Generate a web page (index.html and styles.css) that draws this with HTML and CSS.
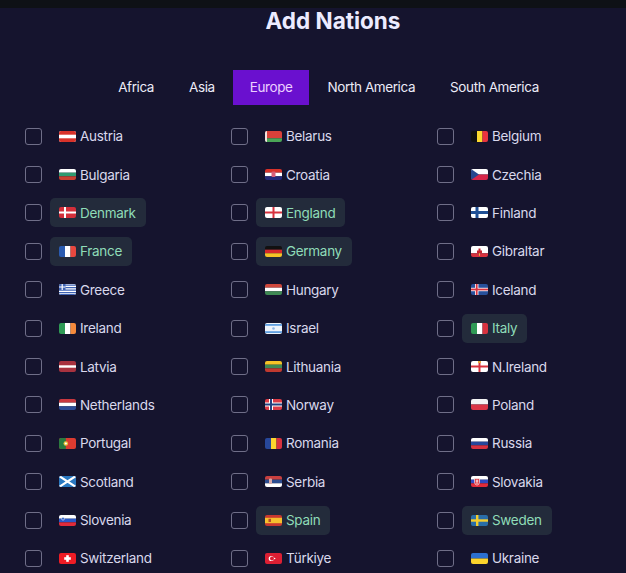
FILE: index.html
```html
<!DOCTYPE html>
<html lang="en">
<head>
    <meta charset="UTF-8">
    <meta name="viewport" content="width=device-width, initial-scale=1.0">
    <title>Add Nations</title>
    <link rel="stylesheet" href="styles.css">
</head>
<body>
    <div class="topbar"></div>
    <h1>Add Nations</h1>

    <nav class="tabs">
        <a class="tab">Africa</a>
        <a class="tab">Asia</a>
        <a class="tab active">Europe</a>
        <a class="tab">North America</a>
        <a class="tab">South America</a>
    </nav>

    <div class="nations">
        <div class="nation"><input type="checkbox"><span class="chip">
            <svg class="flag" viewBox="0 0 17 11"><rect width="17" height="11" fill="#fff"/><rect width="17" height="3.7" fill="#d8322a"/><rect y="7.3" width="17" height="3.7" fill="#d8322a"/></svg>Austria</span></div>
        <div class="nation"><input type="checkbox"><span class="chip">
            <svg class="flag" viewBox="0 0 17 11"><rect width="17" height="7.3" fill="#d8413a"/><rect y="7.3" width="17" height="3.7" fill="#4aa657"/><rect width="2" height="11" fill="#f3e3e0"/></svg>Belarus</span></div>
        <div class="nation"><input type="checkbox"><span class="chip">
            <svg class="flag" viewBox="0 0 17 11"><rect width="6" height="11" fill="#111"/><rect x="6" width="5.5" height="11" fill="#fbd92f"/><rect x="11.5" width="5.5" height="11" fill="#e8343f"/></svg>Belgium</span></div>

        <div class="nation"><input type="checkbox"><span class="chip">
            <svg class="flag" viewBox="0 0 17 11"><rect width="17" height="3.7" fill="#fff"/><rect y="3.7" width="17" height="3.6" fill="#2f9a6f"/><rect y="7.3" width="17" height="3.7" fill="#c9402f"/></svg>Bulgaria</span></div>
        <div class="nation"><input type="checkbox"><span class="chip">
            <svg class="flag" viewBox="0 0 17 11"><rect width="17" height="3.7" fill="#d8322a"/><rect y="3.7" width="17" height="3.6" fill="#fff"/><rect y="7.3" width="17" height="3.7" fill="#23297a"/><rect x="6.5" y="2.5" width="4" height="5.5" rx="1" fill="#d8607a"/></svg>Croatia</span></div>
        <div class="nation"><input type="checkbox"><span class="chip">
            <svg class="flag" viewBox="0 0 17 11"><rect width="17" height="5.5" fill="#fff"/><rect y="5.5" width="17" height="5.5" fill="#d8274a"/><path d="M0 0L8 5.5L0 11Z" fill="#27478f"/></svg>Czechia</span></div>

        <div class="nation picked"><input type="checkbox"><span class="chip">
            <svg class="flag" viewBox="0 0 17 11"><rect width="17" height="11" fill="#d32f3a"/><rect x="5" width="2" height="11" fill="#fff"/><rect y="4.5" width="17" height="2" fill="#fff"/></svg>Denmark</span></div>
        <div class="nation picked"><input type="checkbox"><span class="chip">
            <svg class="flag" viewBox="0 0 17 11"><rect width="17" height="11" fill="#fff"/><rect x="7.5" width="2" height="11" fill="#d8323f"/><rect y="4.5" width="17" height="2" fill="#d8323f"/></svg>England</span></div>
        <div class="nation"><input type="checkbox"><span class="chip">
            <svg class="flag" viewBox="0 0 17 11"><rect width="17" height="11" fill="#fff"/><rect x="4.5" width="3" height="11" fill="#1f4f95"/><rect y="4" width="17" height="3" fill="#1f4f95"/></svg>Finland</span></div>

        <div class="nation picked"><input type="checkbox"><span class="chip">
            <svg class="flag" viewBox="0 0 17 11"><rect width="6" height="11" fill="#2a5bb0"/><rect x="6" width="5.5" height="11" fill="#fff"/><rect x="11.5" width="5.5" height="11" fill="#e8483f"/></svg>France</span></div>
        <div class="nation picked"><input type="checkbox"><span class="chip">
            <svg class="flag" viewBox="0 0 17 11"><rect width="17" height="3.7" fill="#111"/><rect y="3.7" width="17" height="3.6" fill="#d6282b"/><rect y="7.3" width="17" height="3.7" fill="#f6c326"/></svg>Germany</span></div>
        <div class="nation"><input type="checkbox"><span class="chip">
            <svg class="flag" viewBox="0 0 17 11"><rect width="17" height="7.3" fill="#fff"/><rect y="7.3" width="17" height="3.7" fill="#d8323f"/><path d="M6 7.3V4.5H7.5V2.5H9.5V4.5H11V7.3Z" fill="#c4232f"/><rect x="8" y="7.3" width="1" height="2.5" fill="#e8b93a"/></svg>Gibraltar</span></div>

        <div class="nation"><input type="checkbox"><span class="chip">
            <svg class="flag" viewBox="0 0 17 11"><rect width="17" height="11" fill="#fff"/><path d="M0 1.2H17M0 3.7H17M0 6.2H17M0 8.7H17M0 10.7H17" stroke="#3f63b4" stroke-width="1.2"/><rect width="6.5" height="6" fill="#3f63b4"/><path d="M3.2 0V6M0 3H6.5" stroke="#fff" stroke-width="1.2"/></svg>Greece</span></div>
        <div class="nation"><input type="checkbox"><span class="chip">
            <svg class="flag" viewBox="0 0 17 11"><rect width="17" height="3.7" fill="#d0483c"/><rect y="3.7" width="17" height="3.6" fill="#fff"/><rect y="7.3" width="17" height="3.7" fill="#3f8a54"/></svg>Hungary</span></div>
        <div class="nation"><input type="checkbox"><span class="chip">
            <svg class="flag" viewBox="0 0 17 11"><rect width="17" height="11" fill="#27509b"/><rect x="4" width="3.4" height="11" fill="#fff"/><rect y="3.8" width="17" height="3.4" fill="#fff"/><rect x="4.8" width="1.8" height="11" fill="#d8323f"/><rect y="4.6" width="17" height="1.8" fill="#d8323f"/></svg>Iceland</span></div>

        <div class="nation"><input type="checkbox"><span class="chip">
            <svg class="flag" viewBox="0 0 17 11"><rect width="6" height="11" fill="#2f9a55"/><rect x="6" width="5.5" height="11" fill="#fff"/><rect x="11.5" width="5.5" height="11" fill="#f58a3c"/></svg>Ireland</span></div>
        <div class="nation"><input type="checkbox"><span class="chip">
            <svg class="flag" viewBox="0 0 17 11"><rect width="17" height="11" fill="#eef4fb"/><rect y="1" width="17" height="1.8" fill="#5f9fe0"/><rect y="8.2" width="17" height="1.8" fill="#5f9fe0"/><circle cx="8.5" cy="5.5" r="1.3" fill="#8db6e6"/></svg>Israel</span></div>
        <div class="nation picked"><input type="checkbox"><span class="chip">
            <svg class="flag" viewBox="0 0 17 11"><rect width="6" height="11" fill="#2f9a55"/><rect x="6" width="5.5" height="11" fill="#fff"/><rect x="11.5" width="5.5" height="11" fill="#d8323f"/></svg>Italy</span></div>

        <div class="nation"><input type="checkbox"><span class="chip">
            <svg class="flag" viewBox="0 0 17 11"><rect width="17" height="11" fill="#a8323f"/><rect y="4.3" width="17" height="2.4" fill="#fff"/></svg>Latvia</span></div>
        <div class="nation"><input type="checkbox"><span class="chip">
            <svg class="flag" viewBox="0 0 17 11"><rect width="17" height="3.7" fill="#f6c326"/><rect y="3.7" width="17" height="3.6" fill="#3f8a54"/><rect y="7.3" width="17" height="3.7" fill="#c0392f"/></svg>Lithuania</span></div>
        <div class="nation"><input type="checkbox"><span class="chip">
            <svg class="flag" viewBox="0 0 17 11"><rect width="17" height="11" fill="#fff"/><rect x="7.5" width="2" height="11" fill="#d8323f"/><rect y="4.5" width="17" height="2" fill="#d8323f"/><rect x="7" y="0" width="3" height="2" fill="#e8a83a"/></svg>N.Ireland</span></div>

        <div class="nation"><input type="checkbox"><span class="chip">
            <svg class="flag" viewBox="0 0 17 11"><rect width="17" height="3.7" fill="#c9383f"/><rect y="3.7" width="17" height="3.6" fill="#fff"/><rect y="7.3" width="17" height="3.7" fill="#2c4c96"/></svg>Netherlands</span></div>
        <div class="nation"><input type="checkbox"><span class="chip">
            <svg class="flag" viewBox="0 0 17 11"><rect width="17" height="11" fill="#dc3b45"/><rect x="4" width="4" height="11" fill="#fff"/><rect y="3.5" width="17" height="4" fill="#fff"/><rect x="5" width="2" height="11" fill="#24427f"/><rect y="4.5" width="17" height="2" fill="#24427f"/></svg>Norway</span></div>
        <div class="nation"><input type="checkbox"><span class="chip">
            <svg class="flag" viewBox="0 0 17 11"><rect width="17" height="5.5" fill="#f4f4f4"/><rect y="5.5" width="17" height="5.5" fill="#dc3545"/></svg>Poland</span></div>

        <div class="nation"><input type="checkbox"><span class="chip">
            <svg class="flag" viewBox="0 0 17 11"><rect width="17" height="11" fill="#dc3b30"/><rect width="6.8" height="11" fill="#2a7a3f"/><circle cx="6.8" cy="5.5" r="2.3" fill="#e8c23a"/><circle cx="6.8" cy="5.5" r="1.1" fill="#fff"/></svg>Portugal</span></div>
        <div class="nation"><input type="checkbox"><span class="chip">
            <svg class="flag" viewBox="0 0 17 11"><rect width="6" height="11" fill="#27479a"/><rect x="6" width="5.5" height="11" fill="#fcd52e"/><rect x="11.5" width="5.5" height="11" fill="#d8323f"/></svg>Romania</span></div>
        <div class="nation"><input type="checkbox"><span class="chip">
            <svg class="flag" viewBox="0 0 17 11"><rect width="17" height="3.7" fill="#fff"/><rect y="3.7" width="17" height="3.6" fill="#27479a"/><rect y="7.3" width="17" height="3.7" fill="#d8323f"/></svg>Russia</span></div>

        <div class="nation"><input type="checkbox"><span class="chip">
            <svg class="flag" viewBox="0 0 17 11"><rect width="17" height="11" fill="#2a78c0"/><path d="M0 0L17 11M17 0L0 11" stroke="#fff" stroke-width="2.2"/></svg>Scotland</span></div>
        <div class="nation"><input type="checkbox"><span class="chip">
            <svg class="flag" viewBox="0 0 17 11"><rect width="17" height="3.7" fill="#c9403f"/><rect y="3.7" width="17" height="3.6" fill="#2c4c8f"/><rect y="7.3" width="17" height="3.7" fill="#fff"/><rect x="4" y="2.5" width="3" height="5.5" rx="1" fill="#d8a8a8"/></svg>Serbia</span></div>
        <div class="nation"><input type="checkbox"><span class="chip">
            <svg class="flag" viewBox="0 0 17 11"><rect width="17" height="3.7" fill="#fff"/><rect y="3.7" width="17" height="3.6" fill="#3048c0"/><rect y="7.3" width="17" height="3.7" fill="#e02b3a"/><path d="M3.5 2.5H8.5V6.5Q8.5 8.5 6 9.2Q3.5 8.5 3.5 6.5Z" fill="#e0404a" stroke="#fff" stroke-width=".6"/><path d="M6 3.5V8M4.8 5H7.2" stroke="#fff" stroke-width=".8"/></svg>Slovakia</span></div>

        <div class="nation"><input type="checkbox"><span class="chip">
            <svg class="flag" viewBox="0 0 17 11"><rect width="17" height="3.7" fill="#fff"/><rect y="3.7" width="17" height="3.6" fill="#2a58c8"/><rect y="7.3" width="17" height="3.7" fill="#e02b3a"/><circle cx="4" cy="3.7" r="1.5" fill="#3a68c8" stroke="#fff" stroke-width=".5"/></svg>Slovenia</span></div>
        <div class="nation picked"><input type="checkbox"><span class="chip">
            <svg class="flag" viewBox="0 0 17 11"><rect width="17" height="11" fill="#c8382f"/><rect y="2.8" width="17" height="5.4" fill="#f5c02e"/><rect x="3.5" y="3.8" width="2.5" height="3.2" fill="#b5482a"/></svg>Spain</span></div>
        <div class="nation picked"><input type="checkbox"><span class="chip">
            <svg class="flag" viewBox="0 0 17 11"><rect width="17" height="11" fill="#2a6ea8"/><rect x="5" width="2.4" height="11" fill="#f5cd2e"/><rect y="4.3" width="17" height="2.4" fill="#f5cd2e"/></svg>Sweden</span></div>

        <div class="nation"><input type="checkbox"><span class="chip">
            <svg class="flag" viewBox="0 0 17 11"><rect width="17" height="11" fill="#ee1c25"/><rect x="7.2" y="2.2" width="2.6" height="6.6" fill="#fff"/><rect x="5.2" y="4.2" width="6.6" height="2.6" fill="#fff"/></svg>Switzerland</span></div>
        <div class="nation"><input type="checkbox"><span class="chip">
            <svg class="flag" viewBox="0 0 17 11"><rect width="17" height="11" fill="#dc1f33"/><circle cx="6.3" cy="5.5" r="2.6" fill="#fff"/><circle cx="7" cy="5.5" r="2" fill="#dc1f33"/><circle cx="9.6" cy="5.5" r=".8" fill="#fff"/></svg>Türkiye</span></div>
        <div class="nation"><input type="checkbox"><span class="chip">
            <svg class="flag" viewBox="0 0 17 11"><rect width="17" height="5.5" fill="#2b6fd0"/><rect y="5.5" width="17" height="5.5" fill="#fbd32c"/></svg>Ukraine</span></div>
    </div>
</body>
</html>
```

FILE: styles.css
```css
* {
    margin: 0;
    padding: 0;
    box-sizing: border-box;
}

html, body {
    height: 573px;
    overflow: hidden;
}

body {
    font-family: 'Inter', 'Noto Sans', sans-serif;
    background: #15142e;
    color: #d9d8ec;
}

.topbar {
    height: 8px;
    background: #0e1116;
}

h1 {
    font-size: 22.5px;
    font-weight: 700;
    line-height: 26px;
    text-align: center;
    color: #ecebff;
    padding-left: 40px;
}

.tabs {
    display: flex;
    justify-content: center;
    margin-top: 36px;
    padding-left: 31px;
}

.tab {
    height: 35px;
    line-height: 35px;
    padding: 0 17.5px;
    font-size: 13.5px;
    letter-spacing: -0.4px;
    color: #ecebf7;
}

.tab.active {
    padding: 0 16.5px;
    margin: 0 1px;
    background: #6a10cf;
    color: #eccfff;
}

.nations {
    display: grid;
    grid-template-columns: repeat(3, 206px);
    grid-auto-rows: 38.4px;
    padding-left: 25px;
    margin-top: 12px;
}

.nation {
    display: flex;
    align-items: center;
    gap: 8px;
    font-size: 13.5px;
    letter-spacing: -0.3px;
}

.nation input {
    appearance: none;
    flex: none;
    width: 17px;
    height: 17px;
    border: 1.5px solid #6f6e88;
    border-radius: 3px;
    background: transparent;
}

.chip {
    display: flex;
    align-items: center;
    gap: 4px;
    height: 29px;
    padding: 0 10px 0 9px;
    border-radius: 5px;
}

.picked .chip {
    background: #232b3b;
    color: #8fdcb8;
}

.flag {
    flex: none;
    width: 17px;
    height: 11px;
    border-radius: 2px;
}
```
